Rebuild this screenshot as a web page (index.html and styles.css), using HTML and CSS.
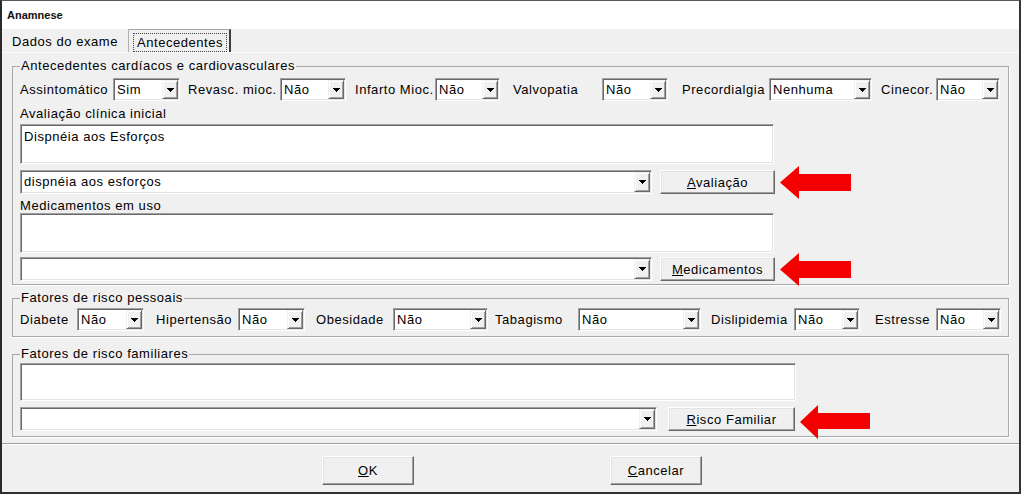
FILE: index.html
```html
<!DOCTYPE html>
<html lang="pt">
<head>
<meta charset="utf-8">
<title>Anamnese</title>
<link rel="stylesheet" href="styles.css">
</head>
<body>
<div class="window">
  <div class="titlebar">Anamnese</div>
  <div class="tabs">
    <div class="tab">Dados do exame</div>
    <div class="tab active"><span class="focus">Antecedentes</span></div>
  </div>
  <div class="content">
    <fieldset class="group g1">
      <legend>Antecedentes cardíacos e cardiovasculares</legend>
      <div class="row">
        <span class="lbl a1">Assintomático</span>
        <div class="combo w67"><span class="val">Sim</span><span class="drop"><svg width="7" height="4" viewBox="0 0 7 4"><path d="M0 0h7v1h-1v1h-1v1h-1v1h-1v-1h-1v-1h-1v-1h-1z"/></svg></span></div>
        <span class="lbl a2">Revasc. mioc.</span>
        <div class="combo w66"><span class="val">Não</span><span class="drop"><svg width="7" height="4" viewBox="0 0 7 4"><path d="M0 0h7v1h-1v1h-1v1h-1v1h-1v-1h-1v-1h-1v-1h-1z"/></svg></span></div>
        <span class="lbl a3">Infarto Mioc.</span>
        <div class="combo w65"><span class="val">Não</span><span class="drop"><svg width="7" height="4" viewBox="0 0 7 4"><path d="M0 0h7v1h-1v1h-1v1h-1v1h-1v-1h-1v-1h-1v-1h-1z"/></svg></span></div>
        <span class="lbl a4">Valvopatia</span>
        <div class="combo w66"><span class="val">Não</span><span class="drop"><svg width="7" height="4" viewBox="0 0 7 4"><path d="M0 0h7v1h-1v1h-1v1h-1v1h-1v-1h-1v-1h-1v-1h-1z"/></svg></span></div>
        <span class="lbl a5">Precordialgia</span>
        <div class="combo w103"><span class="val">Nenhuma</span><span class="drop"><svg width="7" height="4" viewBox="0 0 7 4"><path d="M0 0h7v1h-1v1h-1v1h-1v1h-1v-1h-1v-1h-1v-1h-1z"/></svg></span></div>
        <span class="lbl a6">Cinecor.</span>
        <div class="combo w64"><span class="val">Não</span><span class="drop"><svg width="7" height="4" viewBox="0 0 7 4"><path d="M0 0h7v1h-1v1h-1v1h-1v1h-1v-1h-1v-1h-1v-1h-1z"/></svg></span></div>
      </div>
      <div class="caption cap1">Avaliação clínica inicial</div>
      <div class="memo memo1">Dispnéia aos Esforços</div>
      <div class="actrow act1">
        <div class="combo wide1"><span class="val">dispnéia aos esforços</span><span class="drop"><svg width="7" height="4" viewBox="0 0 7 4"><path d="M0 0h7v1h-1v1h-1v1h-1v1h-1v-1h-1v-1h-1v-1h-1z"/></svg></span></div>
        <div class="btn b1"><span><u>A</u>valiação</span></div>
        <svg class="arrow" width="71" height="33" viewBox="0 0 71 33"><polygon points="0,16.5 19,0 19,8 71,8 71,25 19,25 19,33" fill="#f50000"/></svg>
      </div>
      <div class="caption cap2">Medicamentos em uso</div>
      <div class="memo memo1"></div>
      <div class="actrow act2">
        <div class="combo wide1"><span class="val"></span><span class="drop"><svg width="7" height="4" viewBox="0 0 7 4"><path d="M0 0h7v1h-1v1h-1v1h-1v1h-1v-1h-1v-1h-1v-1h-1z"/></svg></span></div>
        <div class="btn b1"><span><u>M</u>edicamentos</span></div>
        <svg class="arrow" width="71" height="33" viewBox="0 0 71 33"><polygon points="0,16.5 19,0 19,8 71,8 71,25 19,25 19,33" fill="#f50000"/></svg>
      </div>
    </fieldset>

    <fieldset class="group g2">
      <legend>Fatores de risco pessoais</legend>
      <div class="row">
        <span class="lbl p1">Diabete</span>
        <div class="combo w67"><span class="val">Não</span><span class="drop"><svg width="7" height="4" viewBox="0 0 7 4"><path d="M0 0h7v1h-1v1h-1v1h-1v1h-1v-1h-1v-1h-1v-1h-1z"/></svg></span></div>
        <span class="lbl p2">Hipertensão</span>
        <div class="combo w67"><span class="val">Não</span><span class="drop"><svg width="7" height="4" viewBox="0 0 7 4"><path d="M0 0h7v1h-1v1h-1v1h-1v1h-1v-1h-1v-1h-1v-1h-1z"/></svg></span></div>
        <span class="lbl p3">Obesidade</span>
        <div class="combo w95"><span class="val">Não</span><span class="drop"><svg width="7" height="4" viewBox="0 0 7 4"><path d="M0 0h7v1h-1v1h-1v1h-1v1h-1v-1h-1v-1h-1v-1h-1z"/></svg></span></div>
        <span class="lbl p4">Tabagismo</span>
        <div class="combo w123"><span class="val">Não</span><span class="drop"><svg width="7" height="4" viewBox="0 0 7 4"><path d="M0 0h7v1h-1v1h-1v1h-1v1h-1v-1h-1v-1h-1v-1h-1z"/></svg></span></div>
        <span class="lbl p5">Dislipidemia</span>
        <div class="combo w66"><span class="val">Não</span><span class="drop"><svg width="7" height="4" viewBox="0 0 7 4"><path d="M0 0h7v1h-1v1h-1v1h-1v1h-1v-1h-1v-1h-1v-1h-1z"/></svg></span></div>
        <span class="lbl p6">Estresse</span>
        <div class="combo w65"><span class="val">Não</span><span class="drop"><svg width="7" height="4" viewBox="0 0 7 4"><path d="M0 0h7v1h-1v1h-1v1h-1v1h-1v-1h-1v-1h-1v-1h-1z"/></svg></span></div>
      </div>
    </fieldset>

    <fieldset class="group g3">
      <legend>Fatores de risco familiares</legend>
      <div class="memo memo3"></div>
      <div class="actrow act3">
        <div class="combo wide3"><span class="val"></span><span class="drop"><svg width="7" height="4" viewBox="0 0 7 4"><path d="M0 0h7v1h-1v1h-1v1h-1v1h-1v-1h-1v-1h-1v-1h-1z"/></svg></span></div>
        <div class="btn b3"><span><u>R</u>isco Familiar</span></div>
        <svg class="arrow arrow3" width="70" height="34" viewBox="0 0 70 34"><polygon points="0,17 18,0 18,8 70,8 70,24 18,24 18,34" fill="#f50000"/></svg>
      </div>
    </fieldset>
  </div>
  <div class="footer">
    <div class="btn fbtn"><span><u>O</u>K</span></div>
    <div class="btn fbtn"><span><u>C</u>ancelar</span></div>
  </div>
</div>
</body>
</html>
```

FILE: styles.css
```css
html, body {
  margin: 0;
  padding: 0;
  background: #ffffff;
}

body {
  font-family: "Liberation Sans", Arial, sans-serif;
  font-size: 13px;
  letter-spacing: 0.55px;
  color: #000;
}

.window {
  width: 1021px;
  height: 494px;
  box-sizing: border-box;
  border-left: 2px solid #2a2a2a;
  border-right: 2px solid #333;
  border-top: 1px solid #5a5a5a;
  border-bottom: 2px solid #2f2f2f;
  background: #f0f0f0;
  display: flex;
  flex-direction: column;
}

.titlebar {
  height: 28px;
  flex: none;
  background: #fff;
  font-size: 11px;
  font-weight: bold;
  letter-spacing: 0;
  line-height: 28px;
  padding-left: 5px;
  color: #111;
}

.tabs {
  height: 24px;
  flex: none;
  box-sizing: border-box;
  display: flex;
  padding-left: 10px;
  border-bottom: 1px solid #fbfbfb;
}

.tab {
  width: 116px;
  line-height: 25px;
  white-space: nowrap;
}

.tab.active {
  width: 103px;
  box-sizing: border-box;
  border-left: 1px solid #b0b0b0;
  border-top: 1px solid #a8a8a8;
  border-right: 2px solid #3c3c3c;
  padding: 3px 0 0 4px;
  line-height: 17px;
}

.focus {
  display: block;
  width: 94px;
  height: 19px;
  box-sizing: border-box;
  border: 1px dotted #444;
  padding-left: 3px;
}

.content {
  flex: none;
  padding: 0 10px;
}

.group {
  margin: 6px 0 0;
  padding: 5px 7px 3px;
  border: 1px solid #a9a9a9;
  box-shadow: 1px 1px 0 #fff;
  min-width: 0;
}

.group legend {
  padding: 0 1px;
  line-height: 14px;
  white-space: nowrap;
}

.g2 {
  padding: 3px 7px 5px;
}

.g3 {
  margin-top: 10px;
  padding: 2px 7px 5px;
}

.row {
  display: flex;
  align-items: center;
  height: 23px;
}

.lbl {
  flex: none;
  white-space: nowrap;
}

.a1 { width: 93px; }
.a2 { margin-left: 8px; width: 92px; }
.a3 { margin-left: 9px; width: 80px; }
.a4 { margin-left: 13px; width: 89px; }
.a5 { margin-left: 14px; width: 87px; }
.a6 { margin-left: 9px; width: 55px; }

.p1 { width: 57px; }
.p2 { margin-left: 12px; width: 82px; }
.p3 { margin-left: 11px; width: 77px; }
.p4 { margin-left: 7px; width: 83px; }
.p5 { margin-left: 10px; width: 83px; }
.p6 { margin-left: 15px; width: 61px; }

.combo {
  flex: none;
  height: 23px;
  box-sizing: border-box;
  display: flex;
  background: #fff;
  border: 1px solid;
  border-color: #a0a0a0 #ffffff #ffffff #a0a0a0;
  box-shadow: inset 1px 1px 0 #696969, inset -1px -1px 0 #e3e3e3;
  padding: 1px;
}

.w64 { width: 64px; }
.w65 { width: 65px; }
.w66 { width: 66px; }
.w67 { width: 67px; }
.w95 { width: 95px; }
.w103 { width: 103px; }
.w123 { width: 123px; }
.wide1 { width: 632px; }
.wide3 { width: 637px; }

.actrow .combo {
  height: 24px;
}

.val {
  flex: 1;
  padding-left: 2px;
  line-height: 20px;
  white-space: nowrap;
  overflow: hidden;
}

.drop {
  flex: none;
  width: 16px;
  box-sizing: border-box;
  background: #f0f0f0;
  border: 1px solid;
  border-color: #f0f0f0 #696969 #696969 #f0f0f0;
  box-shadow: inset 1px 1px 0 #fff, inset -1px -1px 0 #a0a0a0;
  display: flex;
  align-items: center;
  justify-content: center;
}

.drop svg {
  display: block;
  fill: #000;
}

.caption {
  line-height: 14px;
  white-space: nowrap;
}

.cap1 { margin-top: 6px; }
.cap2 { margin-top: 5px; line-height: 14px; }

.memo {
  box-sizing: border-box;
  background: #fff;
  border: 1px solid;
  border-color: #a0a0a0 #ffffff #ffffff #a0a0a0;
  box-shadow: inset 1px 1px 0 #696969, inset -1px -1px 0 #e3e3e3;
  padding: 4px 3px;
  line-height: 15px;
}

.memo1 {
  width: 754px;
  height: 40px;
  margin-top: 3px;
}

.cap2 + .memo1 {
  margin-top: 0;
}

.memo3 {
  width: 776px;
  height: 38px;
}

.actrow {
  display: flex;
  align-items: center;
  height: 24px;
}

.act1 { margin-top: 6px; }
.act2 { margin-top: 4px; }
.act3 { margin-top: 6px; }

.btn {
  flex: none;
  height: 24px;
  box-sizing: border-box;
  background: #f0f0f0;
  border: 1px solid;
  border-color: #ffffff #696969 #696969 #ffffff;
  box-shadow: inset -1px -1px 0 #a0a0a0, inset 1px 1px 0 #e3e3e3;
  display: flex;
  align-items: center;
  justify-content: center;
  white-space: nowrap;
}

.b1 {
  margin-left: 8px;
  width: 115px;
}

.b3 {
  margin-left: 11px;
  width: 127px;
}

.arrow {
  flex: none;
  display: block;
  margin: -4px 0 -5px 5px;
}

.arrow3 {
  margin: -4px 0 -10px 5px;
}

.footer {
  flex: 1;
  margin-top: 6px;
  border-top: 1px solid #a0a0a0;
  box-shadow: inset 0 1px 0 #fff;
  display: flex;
  align-items: flex-start;
  padding: 12px 0 0 320px;
  gap: 196px;
}

.fbtn {
  width: 92px;
  height: 29px;
}
```
